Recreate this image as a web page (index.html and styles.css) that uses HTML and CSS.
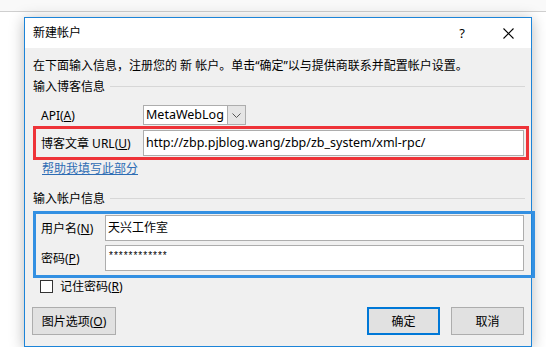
FILE: index.html
```html
<!DOCTYPE html>
<html lang="zh-CN">
<head>
    <meta charset="UTF-8">
    <title>新建帐户</title>
    <link rel="stylesheet" href="styles.css">
</head>
<body>
<div id="topbar"></div>
<div id="dialog">
    <div class="titlebar">
        <span class="title">新建帐户</span>
        <span class="tb-btn help-btn">?</span>
        <span class="tb-btn">
            <svg width="11" height="11" viewBox="0 0 11 11"><path d="M0.5 0.5 L10.5 10.5 M10.5 0.5 L0.5 10.5" stroke="#000" stroke-width="1.1" fill="none"/></svg>
        </span>
    </div>
    <div class="content">
        <p class="intro">在下面输入信息，注册您的 新 帐户。单击“确定”以与提供商联系并配置帐户设置。</p>
        <div class="group-head"><span>输入博客信息</span><i class="rule"></i></div>
        <div class="row api-row">
            <label class="lbl lbl-wide">API(<u>A</u>)</label>
            <div class="select">
                <span class="select-val">MetaWebLog</span>
                <span class="select-btn">
                    <svg width="9" height="5" viewBox="0 0 9 5"><path d="M0.5 0.5 L4.5 4.5 L8.5 0.5" stroke="#555" stroke-width="1" fill="none"/></svg>
                </span>
            </div>
        </div>
        <div class="frame frame-red">
            <div class="row">
                <label class="lbl lbl-wide">博客文章 URL(<u>U</u>)</label>
                <div class="input input-url">http://zbp.pjblog.wang/zbp/zb_system/xml-rpc/</div>
            </div>
        </div>
        <a href="javascript:;" class="help">帮助我填写此部分</a>
        <div class="group-head group-head2"><span>输入帐户信息</span><i class="rule"></i></div>
        <div class="frame frame-blue">
            <div class="row">
                <label class="lbl lbl-narrow">用户名(<u>N</u>)</label>
                <div class="input input-acct">天兴工作室</div>
            </div>
            <div class="row row-gap">
                <label class="lbl lbl-narrow">密码(<u>P</u>)</label>
                <div class="input input-acct pwd">************</div>
            </div>
        </div>
        <div class="check"><span class="box"></span>记住密码(<u>R</u>)</div>
        <div class="buttons">
            <span class="btn btn-pic">图片选项(<u>O</u>)</span>
            <span class="spacer"></span>
            <span class="btn btn-ok">确定</span>
            <span class="btn">取消</span>
        </div>
    </div>
</div>
</body>
</html>
```

FILE: styles.css
```css
* {
    margin: 0;
    padding: 0;
    box-sizing: border-box;
}

body {
    background: #fff;
    font-family: "Noto Sans", "Noto Sans CJK SC", sans-serif;
    font-size: 12px;
    color: #000;
    overflow: hidden;
}

u {
    text-decoration: underline;
    text-underline-offset: 1px;
}

#topbar {
    height: 12px;
    background: #f9f9f9;
    border-bottom: 1px solid #cfcfcf;
}

#dialog {
    width: 508px;
    height: 330px;
    margin: 5px 0 0 24px;
    border: 1px solid #1c84d8;
    background: #f0f0f0;
    box-shadow: 0 2px 14px rgba(0, 0, 0, 0.28);
}

.titlebar {
    height: 30px;
    background: #fff;
    display: flex;
    align-items: center;
    padding-left: 8px;
}

.title {
    flex: 1;
    font-size: 12px;
    line-height: 30px;
}

.tb-btn {
    width: 46px;
    height: 30px;
    display: flex;
    align-items: center;
    justify-content: center;
}

.help-btn {
    font-size: 13px;
}

.content {
    padding: 8px 6px 0 8px;
}

.intro {
    line-height: 20px;
    white-space: nowrap;
}

.group-head {
    display: flex;
    align-items: center;
    height: 20px;
}

.group-head2 {
    margin-top: 10px;
}

.rule {
    flex: 1;
    height: 1px;
    margin-left: 5px;
    background: #d7d7d7;
}

.row {
    display: flex;
    align-items: center;
}

.row-gap {
    margin-top: 4px;
}

.api-row {
    margin-top: 9px;
    height: 20px;
    padding-left: 8px;
}

.lbl {
    white-space: nowrap;
}

.lbl-wide {
    width: 102px;
}

.lbl-narrow {
    width: 64px;
}

.select {
    width: 103px;
    height: 20px;
    border: 1px solid #adadad;
    background: #fff;
    display: flex;
}

.select-val {
    flex: 1;
    padding-left: 2px;
    line-height: 18px;
    font-size: 12.5px;
}

.select-btn {
    width: 18px;
    background: #e5e5e5;
    border-left: 1px solid #adadad;
    display: flex;
    align-items: center;
    justify-content: center;
}

.frame {
    border: 3px solid;
}

.frame-red {
    width: 496px;
    margin-top: 1px;
    border-color: #ee3338;
    padding: 1px 2px 1px 5px;
}

.frame-blue {
    width: 502px;
    margin-top: 3px;
    border-color: #3390e2;
    padding: 1px 8px 4px 5px;
}

.input {
    height: 26px;
    border: 1px solid #adadad;
    background: #fff;
    line-height: 24px;
    padding-left: 2px;
    white-space: nowrap;
}

.input-url {
    width: 381px;
    font-size: 12.5px;
}

.input-acct {
    width: 419px;
}

.pwd {
    font-family: "Liberation Sans", sans-serif;
    font-size: 10px;
    letter-spacing: 1px;
    line-height: 20px;
    padding-left: 3px;
}

.help {
    display: block;
    margin-left: 9px;
    line-height: 18px;
    color: #2e6db4;
    text-decoration: underline;
    width: max-content;
}

.check {
    display: flex;
    align-items: center;
    height: 14px;
    margin-top: 1px;
    padding-left: 7px;
}

.box {
    width: 13px;
    height: 13px;
    border: 1px solid #333;
    background: #fff;
    margin-right: 7px;
}

.buttons {
    display: flex;
    margin: 14px 1px 0 -1px;
}

.spacer {
    flex: 1;
}

.btn {
    width: 73px;
    height: 28px;
    border: 1px solid #adadad;
    background: #e1e1e1;
    display: flex;
    align-items: center;
    justify-content: center;
    margin-left: 11px;
}

.btn-pic {
    width: 84px;
    margin-left: 0;
}

.btn-ok {
    border: 2px solid #0078d7;
    margin-left: 0;
}
```
